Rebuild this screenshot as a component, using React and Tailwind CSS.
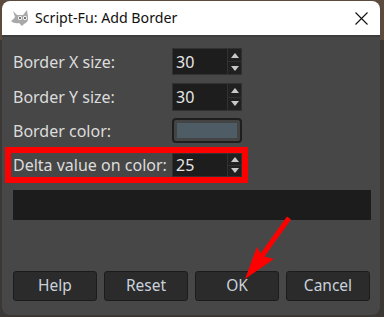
import React from "react";

const font = { fontFamily: '"Noto Sans", "Open Sans", sans-serif' };

const Spin = ({ value }) => (
  <div className="flex h-full w-[70px] border border-[#313131] bg-[#1d1d1d]">
    <div className="flex-1 flex items-center pl-[3px] text-[16px] text-[#e6e6e6]">{value}</div>
    <div className="w-[14px] flex flex-col border-l border-[#313131] bg-[#202020]">
      <div className="flex-1 flex items-center justify-center border-b border-[#313131]">
        <svg width="8" height="5" viewBox="0 0 8 5">
          <polygon points="0,5 4,0 8,5" fill="#c8c8c8" />
        </svg>
      </div>
      <div className="flex-1 flex items-center justify-center">
        <svg width="8" height="5" viewBox="0 0 8 5">
          <polygon points="0,0 8,0 4,5" fill="#c8c8c8" />
        </svg>
      </div>
    </div>
  </div>
);

const Btn = ({ children }) => (
  <button className="w-[84px] h-full rounded-[3px] border border-[#1c1c1c] bg-[#2b2b2b] text-[15.5px] text-[#c9d2dc]">
    {children}
  </button>
);

export default function App() {
  return (
    <div className="relative w-[384px] h-[317px] bg-[#3a3735] overflow-hidden" style={font}>
      <div className="absolute left-0 top-0 w-[384px] h-[40px] bg-[#5c4a3c]" />
      <div className="relative ml-[2px] mt-[1px] w-[378px] h-[314px] rounded-lg overflow-hidden bg-[#474747] flex flex-col">
        <div className="h-[36px] bg-white flex items-center border-b-2 border-[#3c3c3c]">
          <svg className="ml-[8px]" width="22" height="18" viewBox="0 0 22 18">
            <path d="M3 2 L7 6 L13 6 L17 1 L18 8 Q19 13 14 15 L12 17 L9 14 Q4 15 1 12 Q4 10 5 8 Z" fill="#a9a9a9" />
            <circle cx="10" cy="9" r="2" fill="#fff" />
            <circle cx="15" cy="9" r="2" fill="#fff" />
            <circle cx="10" cy="9" r="0.9" fill="#333" />
            <circle cx="15" cy="9" r="0.9" fill="#333" />
          </svg>
          <span className="ml-[3px] text-[14.2px] text-[#111]">Script-Fu: Add Border</span>
          <svg className="ml-auto mr-[12px]" width="13" height="13" viewBox="0 0 13 13">
            <path d="M0.5 0.5 L12.5 12.5 M12.5 0.5 L0.5 12.5" stroke="#111" strokeWidth="1.1" />
          </svg>
        </div>
        <div className="flex flex-col pl-[11px] pr-[9px] text-[16px] text-[#dcdcdc]">
          <div className="mt-[11px] h-[27px] flex items-center">
            <span className="w-[159px]">Border X size:</span>
            <Spin value="30" />
          </div>
          <div className="mt-[8px] h-[28px] flex items-center">
            <span className="w-[159px]">Border Y size:</span>
            <Spin value="30" />
          </div>
          <div className="mt-[7px] h-[25px] flex items-center">
            <span className="w-[159px]">Border color:</span>
            <div className="w-[70px] h-full rounded-[4px] border-2 border-[#1e1e1e] bg-[#444] flex items-center justify-center">
              <div className="w-[60px] h-[15px] bg-[#4e5c66]" />
            </div>
          </div>
          <div className="mt-[4px] -ml-[8px] w-[243px] h-[36px] border-[6px] border-[#ff0000] flex items-center">
            <span className="w-[161px] pl-[2px]">Delta value on color:</span>
            <Spin value="25" />
          </div>
          <div className="mt-[7px] h-[30px] w-[358px] bg-[#1c1c1c]" />
          <div className="mt-[51px] h-[30px] flex gap-[7px]">
            <Btn>Help</Btn>
            <Btn>Reset</Btn>
            <Btn>OK</Btn>
            <Btn>Cancel</Btn>
          </div>
        </div>
      </div>
      <svg className="absolute left-0 top-0 pointer-events-none" width="384" height="317">
        <line x1="289" y1="218" x2="261" y2="257" stroke="#ff0000" strokeWidth="5" />
        <polygon points="245,279 257,247 262,256 274,259" fill="#ff0000" />
      </svg>
    </div>
  );
}
